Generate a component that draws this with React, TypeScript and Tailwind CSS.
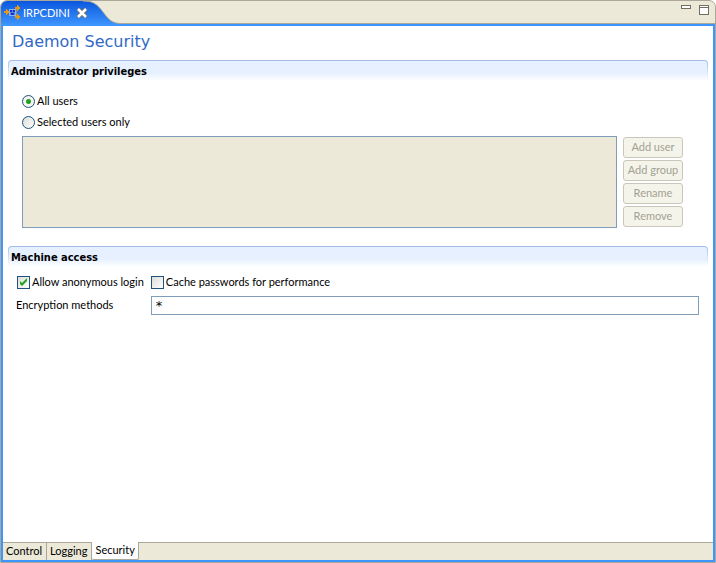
import { useState } from 'react';
import type { ReactNode } from 'react';

const userActions = ['Add user', 'Add group', 'Rename', 'Remove'];
const pages = ['Control', 'Logging', 'Security'];

function DaemonIcon() {
  return (
    <svg width="17" height="15" viewBox="0 0 17 15" shapeRendering="crispEdges" aria-hidden="true">
      <path d="M12 2v11M12 2h2M12 12h2" fill="none" stroke="#8d8a80" />
      <rect x="5" y="4" width="7" height="7" fill="#8fb2ee" />
      <rect x="6" y="5" width="5" height="5" fill="#4b86ee" />
      <path d="M6 5h2v2H6zM9 5h2v2H9zM7 8h3v2H7z" fill="#1a2fc4" />
      <path d="M0 6h2V4h1v1h1v1h1v2H4v1H3v1H2V8H0z" fill="#e59a12" />
      <path d="M11 2h2V0h1v1h1v1h1v2h-1v1h-1v1h-1V4h-2z" fill="#e59a12" />
      <path d="M11 11h2V9h1v1h1v1h1v2h-1v1h-1v1h-1v-2h-2z" fill="#e59a12" />
    </svg>
  );
}

function Section({ title, children }: { title: string; children: ReactNode }) {
  return (
    <section>
      <div className="rounded-t-[4px] bg-linear-to-b from-[#a0bcea] to-white px-px pt-px">
        <h2 className="h-5 rounded-t-[3px] bg-linear-to-b from-[#e6f0ff] from-60% to-white pl-0.5 font-['DejaVu_Sans_Condensed','DejaVu_Sans',sans-serif] text-[11px] leading-[21px] font-bold">
          {title}
        </h2>
      </div>
      {children}
    </section>
  );
}

export default function App() {
  const [access, setAccess] = useState('all');
  const [page, setPage] = useState('Security');

  const radio =
    'size-[13px] appearance-none rounded-full border border-[#1d5281] bg-linear-to-br from-[#dcdcd7] to-white checked:bg-[radial-gradient(circle,#21a121_0_2px,#f4f4f1_3px)]';
  const checkbox =
    'peer col-start-1 row-start-1 size-[13px] appearance-none border border-[#1d5281] bg-linear-to-br from-[#dcdcd7] to-white';

  return (
    <div className="flex h-screen flex-col overflow-hidden rounded-t-[7px] border border-[#aca899] bg-[#ece9d8] font-[Lato,sans-serif] text-[11px] text-black">
      {/* Title tab */}
      <header className="flex h-[23px] shrink-0 items-start justify-between border-b border-[#aca899]">
        <div className="relative -mb-px flex h-[23px] w-[120px] items-center pl-[3px] text-white">
          <svg className="absolute inset-0" width="120" height="23" viewBox="0 0 120 23" aria-hidden="true">
            <defs>
              <linearGradient id="tab" x2="0" y2="1">
                <stop stopColor="#0a57df" />
                <stop offset="1" stopColor="#3b92fb" />
              </linearGradient>
            </defs>
            <path d="M0 23V0H82C92 0 96 3 102 11C108 19 111 22 119 22.500V23z" fill="url(#tab)" />
            <path d="M82 0C92 0 96 3 102 11C108 19 111 22 119 22.500" fill="none" stroke="#aca899" />
          </svg>
          <span className="relative flex items-center gap-0.5 leading-[23px]">
            <DaemonIcon />
            <span>IRPCDINI</span>
            <button type="button" aria-label="Close" className="ml-1">
              <svg width="12" height="12" viewBox="0 0 12 12">
                <path d="M2 2l8 8M10 2l-8 8" stroke="#77705c" strokeWidth="4" />
                <path d="M2 2l8 8M10 2l-8 8" stroke="#fff" strokeWidth="2.500" />
              </svg>
            </button>
          </span>
        </div>
        <div className="flex gap-2 pt-1 pr-1.5">
          <button type="button" aria-label="Minimize" className="h-1 w-2.5 border border-[#716f64] bg-white" />
          <button type="button" aria-label="Maximize" className="flex h-2.5 w-2.5 items-start border border-[#716f64] bg-white pt-px">
            <span className="h-px w-full bg-[#716f64]" />
          </button>
        </div>
      </header>

      <div className="flex min-h-0 flex-1 flex-col border-2 border-[#3d95ff] bg-white">
        <main className="flex-1 px-[5px]">
          <h1 className="pt-1 pl-1 font-['DejaVu_Sans',sans-serif] text-[16px] leading-[24px] text-[#316ac5]">Daemon Security</h1>

          <div className="mt-[6px]">
            <Section title="Administrator privileges">
              <div className="flex flex-col gap-2 pt-[14px] pl-[14px]">
                <label className="flex h-[13px] items-center gap-0.5">
                  <input type="radio" name="access" className={radio} checked={access === 'all'} onChange={() => setAccess('all')} />
                  All users
                </label>
                <label className="flex h-[13px] items-center gap-0.5">
                  <input type="radio" name="access" className={radio} checked={access === 'selected'} onChange={() => setAccess('selected')} />
                  Selected users only
                </label>
              </div>
              <div className="mt-[7px] flex gap-1.5 pr-[25px] pl-[14px]">
                <div role="listbox" aria-label="Selected users" aria-disabled="true" className="flex-1 border border-[#7f9db9] bg-[#ece9d8]" />
                <div className="flex w-[60px] flex-col gap-0.5 py-px">
                  {userActions.map((action) => (
                    <button
                      key={action}
                      type="button"
                      disabled={access === 'all'}
                      className="h-[21px] rounded-[3px] border border-[#c9c7ba] bg-[#f5f4ea] whitespace-nowrap disabled:text-[#a1a192]"
                    >
                      {action}
                    </button>
                  ))}
                </div>
              </div>
            </Section>
          </div>

          <div className="mt-[18px]">
            <Section title="Machine access">
              <div className="grid grid-cols-[auto_1fr] gap-x-[7px] gap-y-[7px] pt-[9px] pr-[9px] pl-2">
                <label className="flex h-[13px] items-center gap-0.5 pl-px">
                  <span className="grid">
                    <input type="checkbox" className={checkbox} defaultChecked />
                    <svg className="pointer-events-none invisible col-start-1 row-start-1 peer-checked:visible" width="13" height="13" viewBox="0 0 13 13">
                      <path d="M3 5v3l2 2 5-5V2L5 7z" fill="#21a121" />
                    </svg>
                  </span>
                  Allow anonymous login
                </label>
                <label className="flex h-[13px] items-center gap-0.5">
                  <input type="checkbox" className={checkbox} />
                  Cache passwords for performance
                </label>
                <label htmlFor="encryption" className="self-center">Encryption methods</label>
                <input
                  id="encryption"
                  defaultValue="*"
                  className="h-[19px] min-w-0 border border-[#7f9db9] px-1 font-['DejaVu_Sans',sans-serif] text-[13px]"
                />
              </div>
            </Section>
          </div>
        </main>

        {/* Page tabs */}
        <nav className="flex h-[18px] shrink-0 border-t border-[#aca899] bg-[#ece9d8]">
          {pages.map((name) => (
            <button
              key={name}
              type="button"
              onClick={() => setPage(name)}
              className={`border-r border-[#aca899] pb-px leading-[16px] ${
                page === name ? '-mt-px rounded-b-[2px] border-b bg-white px-[3px]' : 'pr-1 pl-[3px]'
              }`}
            >
              {name}
            </button>
          ))}
        </nav>
      </div>
    </div>
  );
}
